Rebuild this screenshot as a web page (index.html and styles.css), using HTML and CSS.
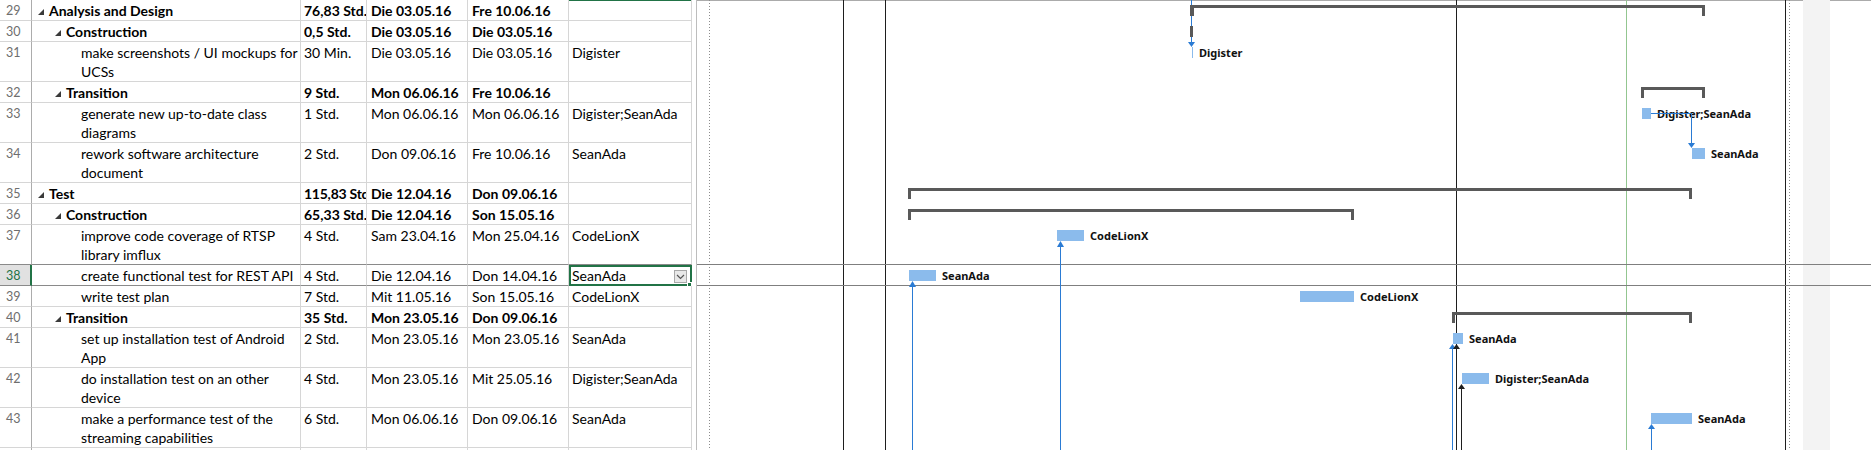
FILE: index.html
```html
<!DOCTYPE html>
<html>
<head>
<meta charset="utf-8">
<title>Gantt</title>
<link rel="stylesheet" href="styles.css">
</head>
<body>
<div class="view">
  <div class="sheet">
    <div class="row single sum">
      <div class="c num">29</div>
      <div class="c name l1"><span class="tri"></span>Analysis and Design</div>
      <div class="c dur">76,83 Std.</div>
      <div class="c date">Die 03.05.16</div>
      <div class="c date">Fre 10.06.16</div>
      <div class="c res colsel"></div>
    </div>
    <div class="row single sum">
      <div class="c num">30</div>
      <div class="c name l2"><span class="tri"></span>Construction</div>
      <div class="c dur">0,5 Std.</div>
      <div class="c date">Die 03.05.16</div>
      <div class="c date">Die 03.05.16</div>
      <div class="c res"></div>
    </div>
    <div class="row double">
      <div class="c num">31</div>
      <div class="c name l3">make screenshots / UI mockups for UCSs</div>
      <div class="c dur">30 Min.</div>
      <div class="c date">Die 03.05.16</div>
      <div class="c date">Die 03.05.16</div>
      <div class="c res">Digister</div>
    </div>
    <div class="row single sum">
      <div class="c num">32</div>
      <div class="c name l2"><span class="tri"></span>Transition</div>
      <div class="c dur">9 Std.</div>
      <div class="c date">Mon 06.06.16</div>
      <div class="c date">Fre 10.06.16</div>
      <div class="c res"></div>
    </div>
    <div class="row double">
      <div class="c num">33</div>
      <div class="c name l3">generate new up-to-date class diagrams</div>
      <div class="c dur">1 Std.</div>
      <div class="c date">Mon 06.06.16</div>
      <div class="c date">Mon 06.06.16</div>
      <div class="c res">Digister;SeanAda</div>
    </div>
    <div class="row double">
      <div class="c num">34</div>
      <div class="c name l3">rework software architecture document</div>
      <div class="c dur">2 Std.</div>
      <div class="c date">Don 09.06.16</div>
      <div class="c date">Fre 10.06.16</div>
      <div class="c res">SeanAda</div>
    </div>
    <div class="row single sum">
      <div class="c num">35</div>
      <div class="c name l1"><span class="tri"></span>Test</div>
      <div class="c dur tight">115,83 Std.</div>
      <div class="c date">Die 12.04.16</div>
      <div class="c date">Don 09.06.16</div>
      <div class="c res"></div>
    </div>
    <div class="row single sum">
      <div class="c num">36</div>
      <div class="c name l2"><span class="tri"></span>Construction</div>
      <div class="c dur">65,33 Std.</div>
      <div class="c date">Die 12.04.16</div>
      <div class="c date">Son 15.05.16</div>
      <div class="c res"></div>
    </div>
    <div class="row double presel">
      <div class="c num">37</div>
      <div class="c name l3">improve code coverage of RTSP library imflux</div>
      <div class="c dur">4 Std.</div>
      <div class="c date">Sam 23.04.16</div>
      <div class="c date">Mon 25.04.16</div>
      <div class="c res">CodeLionX</div>
    </div>
    <div class="row single sel">
      <div class="c num">38</div>
      <div class="c name l3">create functional test for REST API</div>
      <div class="c dur">4 Std.</div>
      <div class="c date">Die 12.04.16</div>
      <div class="c date">Don 14.04.16</div>
      <div class="c res active">SeanAda<span class="dd"><svg width="9" height="6" viewBox="0 0 9 6"><polyline points="1,1 4.5,4.5 8,1" fill="none" stroke="#555" stroke-width="1.2"/></svg></span><span class="handle"></span></div>
    </div>
    <div class="row single">
      <div class="c num">39</div>
      <div class="c name l3">write test plan</div>
      <div class="c dur">7 Std.</div>
      <div class="c date">Mit 11.05.16</div>
      <div class="c date">Son 15.05.16</div>
      <div class="c res">CodeLionX</div>
    </div>
    <div class="row single sum">
      <div class="c num">40</div>
      <div class="c name l2"><span class="tri"></span>Transition</div>
      <div class="c dur">35 Std.</div>
      <div class="c date">Mon 23.05.16</div>
      <div class="c date">Don 09.06.16</div>
      <div class="c res"></div>
    </div>
    <div class="row double">
      <div class="c num">41</div>
      <div class="c name l3">set up installation test of Android App</div>
      <div class="c dur">2 Std.</div>
      <div class="c date">Mon 23.05.16</div>
      <div class="c date">Mon 23.05.16</div>
      <div class="c res">SeanAda</div>
    </div>
    <div class="row double">
      <div class="c num">42</div>
      <div class="c name l3">do installation test on an other device</div>
      <div class="c dur">4 Std.</div>
      <div class="c date">Mon 23.05.16</div>
      <div class="c date">Mit 25.05.16</div>
      <div class="c res">Digister;SeanAda</div>
    </div>
    <div class="row double">
      <div class="c num">43</div>
      <div class="c name l3">make a performance test of the streaming capabilities</div>
      <div class="c dur">6 Std.</div>
      <div class="c date">Mon 06.06.16</div>
      <div class="c date">Don 09.06.16</div>
      <div class="c res">SeanAda</div>
    </div>
    <div class="row single">
      <div class="c num"></div>
      <div class="c name"></div>
      <div class="c dur"></div>
      <div class="c date"></div>
      <div class="c date"></div>
      <div class="c res"></div>
    </div>
  </div>

  <div class="split"></div>

  <div class="gantt">
    <div class="grid">
      <i class="vl dotted" style="left:12px"></i>
      <i class="vl dark" style="left:146px"></i>
      <i class="vl dark" style="left:188px"></i>
      <i class="vl dark" style="left:759px"></i>
      <i class="vl today" style="left:929px"></i>
      <i class="vl dark" style="left:1088px"></i>
      <i class="vl dotted" style="left:1092px"></i>
      <i class="band" style="left:1106px;width:27px"></i>
    </div>

    <div class="grow single"><div class="summary" style="left:494px;width:514px"></div></div>
    <div class="grow single"><div class="summary zero" style="left:494px;width:3px"></div></div>
    <div class="grow double"><div class="task" style="left:495px"><span class="bar" style="width:1px"></span><span class="lbl">Digister</span></div></div>
    <div class="grow single"><div class="summary" style="left:944px;width:64px"></div></div>
    <div class="grow double"><div class="task" style="left:945px"><span class="bar" style="width:9px"></span><span class="lbl">Digister;SeanAda</span></div></div>
    <div class="grow double"><div class="task" style="left:995px"><span class="bar" style="width:13px"></span><span class="lbl">SeanAda</span></div></div>
    <div class="grow single"><div class="summary" style="left:211px;width:784px"></div></div>
    <div class="grow single"><div class="summary" style="left:211px;width:446px"></div></div>
    <div class="grow double presel"><div class="task" style="left:360px"><span class="bar" style="width:27px"></span><span class="lbl">CodeLionX</span></div></div>
    <div class="grow single sel"><div class="task" style="left:212px"><span class="bar" style="width:27px"></span><span class="lbl">SeanAda</span></div></div>
    <div class="grow single"><div class="task" style="left:603px"><span class="bar" style="width:54px"></span><span class="lbl">CodeLionX</span></div></div>
    <div class="grow single"><div class="summary" style="left:755px;width:240px"></div></div>
    <div class="grow double"><div class="task" style="left:756px"><span class="bar" style="width:10px"></span><span class="lbl">SeanAda</span></div></div>
    <div class="grow double"><div class="task" style="left:765px"><span class="bar" style="width:27px"></span><span class="lbl">Digister;SeanAda</span></div></div>
    <div class="grow double"><div class="task" style="left:954px"><span class="bar" style="width:41px"></span><span class="lbl">SeanAda</span></div></div>

    <svg class="links" width="1174" height="450" viewBox="0 0 1174 450">
      <g class="blue">
        <line x1="494.5" y1="0" x2="494.5" y2="43"/>
        <polygon points="491,42 498,42 494.5,47"/>
        <polyline points="954,113.5 994.5,113.5 994.5,144"/>
        <polygon points="991,143 998,143 994.5,148"/>
        <line x1="363.5" y1="246" x2="363.5" y2="450"/>
        <polygon points="360,247 367,247 363.5,241"/>
        <line x1="215.5" y1="286" x2="215.5" y2="450"/>
        <polygon points="212,287 219,287 215.5,281"/>
        <line x1="755.5" y1="348" x2="755.5" y2="450"/>
        <polygon points="752,349 759,349 755.5,344"/>
        <line x1="954.5" y1="428" x2="954.5" y2="450"/>
        <polygon points="951,429 958,429 954.5,424"/>
      </g>
      <g class="black">
        <polygon points="756,349 763,349 759.5,344"/>
        <line x1="764.5" y1="388" x2="764.5" y2="450"/>
        <polygon points="761,389 768,389 764.5,384"/>
      </g>
      <g class="ticks">
        <rect x="493" y="5" width="3" height="11"/>
        <rect x="493" y="26" width="3" height="11"/>
      </g>
    </svg>
  </div>
</div>
</body>
</html>
```

FILE: styles.css
```css
* {
  box-sizing: border-box;
  margin: 0;
  padding: 0;
}

html, body {
  background: #ffffff;
  overflow: hidden;
}

body {
  font-family: Lato, "Liberation Sans", sans-serif;
  color: #000;
}

.view {
  display: flex;
  height: 450px;
}

/* ---------- sheet (left table) ---------- */
.sheet {
  width: 692px;
  flex: none;
}

.row {
  display: grid;
  grid-template-columns: 32px 269px 66px 101px 101px 123px;
}

.row.single { height: 21px; }
.row.double { height: 40px; }

.c {
  border-right: 1px solid #d6d6d6;
  border-bottom: 1px solid #d6d6d6;
  padding: 1px 3px 0 4px;
  font-size: 14px;
  line-height: 19px;
  overflow: hidden;
  white-space: nowrap;
  position: relative;
}

.c.num {
  color: #6e6e6e;
  font-size: 12.5px;
  padding-left: 6px;
  border-right-color: #acacac;
}

.c.dur { padding-left: 3px; }
.c.dur.tight { letter-spacing: -0.25px; padding-right: 0; }
.c.res { padding-left: 3px; }

.c.name { white-space: normal; }
.c.name.l1 { padding-left: 6px; }
.c.name.l2 { padding-left: 23px; }
.c.name.l3 { padding-left: 49px; padding-right: 2px; }

.sum .c { font-weight: 700; }
.sum .c.num { font-weight: 400; }

.tri {
  display: inline-block;
  width: 0;
  height: 0;
  border-left: 6px solid transparent;
  border-bottom: 6px solid #3a3a3a;
  margin-right: 5px;
  vertical-align: 1px;
}

.colsel {
  box-shadow: inset 0 1px 0 #217346;
}

.presel .c { border-bottom-color: #8a8a8a; }
.sel .c { border-bottom-color: #8a8a8a; }

.sel .c.num {
  background: #e1e1e1;
  color: #217346;
  border-right: 2px solid #217346;
}

.c.active {
  outline: 2px solid #217346;
  outline-offset: -2px;
  overflow: visible;
}

.dd {
  position: absolute;
  right: 4px;
  top: 5px;
  width: 13px;
  height: 13px;
  background: #e8e8e8;
  border: 1px solid #a8a8a8;
  display: flex;
  align-items: center;
  justify-content: center;
}

.handle {
  position: absolute;
  right: -1px;
  bottom: -2px;
  width: 5px;
  height: 5px;
  background: #217346;
  border: 1px solid #fff;
}

/* ---------- splitter ---------- */
.split {
  width: 4px;
  flex: none;
  background: #fff;
}

/* ---------- gantt ---------- */
.gantt {
  flex: 1;
  position: relative;
  border-left: 1px solid #bdbdbd;
  box-shadow: inset 0 1px 0 #ababab;
  overflow: hidden;
}

.grid {
  position: absolute;
  inset: 0;
}

.vl {
  position: absolute;
  top: 0;
  bottom: 0;
  width: 1px;
}

.vl.dark { background: #1e1e1e; }
.vl.today { background: #93c690; }
.vl.dotted {
  background: repeating-linear-gradient(to bottom, #8c8c8c 0 1px, transparent 1px 3px);
}

.band {
  position: absolute;
  top: 0;
  bottom: 0;
  background: #f3f3f3;
}

.grow {
  position: relative;
  border-bottom: 1px solid transparent;
}

.grow.single { height: 21px; }
.grow.double { height: 40px; }
.grow.presel { border-bottom-color: #7f7f7f; }
.grow.sel { border-bottom-color: #7f7f7f; }

.summary {
  position: absolute;
  top: 5px;
  height: 11px;
  border-top: 3px solid #595959;
}

.summary::before,
.summary::after {
  content: "";
  position: absolute;
  top: -3px;
  width: 3px;
  height: 11px;
  background: #595959;
}

.summary::before { left: 0; }
.summary::after { right: 0; }

.summary.zero { border-top: 0; }
.summary.zero::before,
.summary.zero::after { display: none; }

.task {
  position: absolute;
  top: 5px;
  height: 11px;
  display: flex;
  align-items: center;
  gap: 6px;
}

.bar {
  display: block;
  height: 11px;
  background: #8bbbec;
}

.lbl {
  font-family: "Noto Sans", "Liberation Sans", sans-serif;
  font-weight: 700;
  font-size: 11px;
  line-height: 11px;
  white-space: nowrap;
  color: #111;
}

.links {
  position: absolute;
  left: 0;
  top: 0;
}

.links .blue line,
.links .blue polyline {
  stroke: #2a7bd4;
  stroke-width: 1;
  fill: none;
}
.links .blue polygon { fill: #2a7bd4; }

.links .black line { stroke: #1e1e1e; stroke-width: 1; }
.links .black polygon { fill: #1e1e1e; }

.links .ticks rect { fill: #595959; }
```
